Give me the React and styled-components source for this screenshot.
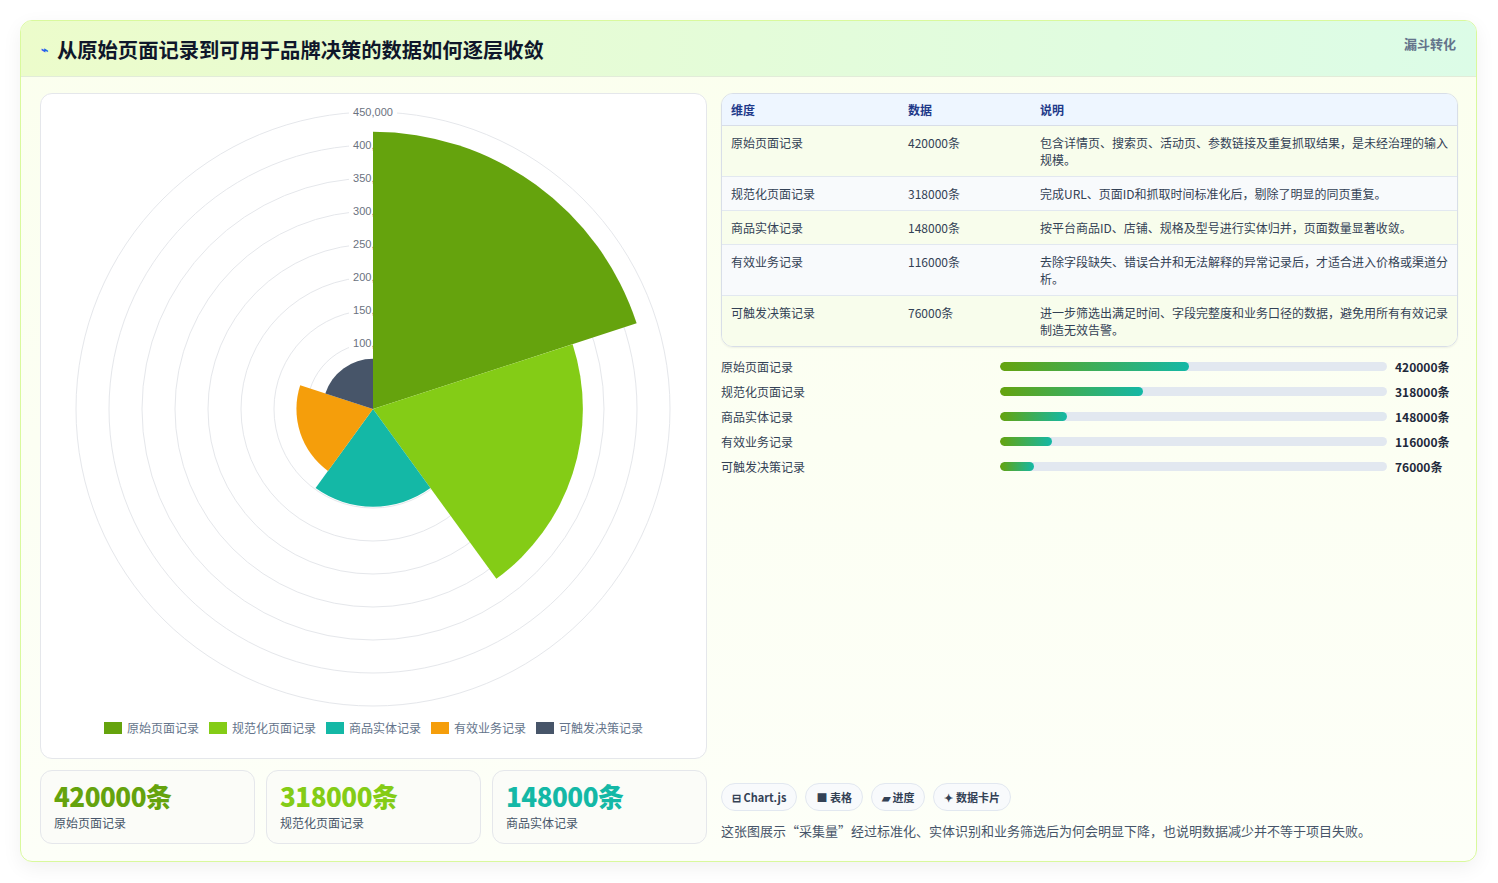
import React from 'react'
import styled, { createGlobalStyle } from 'styled-components'

const GlobalStyle = createGlobalStyle`
  body { margin: 0; background: #fff; font-family: "Noto Sans CJK SC", "Noto Sans", sans-serif; }
`

const rows = [
  { name: '原始页面记录', value: 420000, color: '#65a30d', desc: '包含详情页、搜索页、活动页、参数链接及重复抓取结果，是未经治理的输入规模。' },
  { name: '规范化页面记录', value: 318000, color: '#84cc16', desc: '完成URL、页面ID和抓取时间标准化后，剔除了明显的同页重复。' },
  { name: '商品实体记录', value: 148000, color: '#14b8a6', desc: '按平台商品ID、店铺、规格及型号进行实体归并，页面数量显著收敛。' },
  { name: '有效业务记录', value: 116000, color: '#f59e0b', desc: '去除字段缺失、错误合并和无法解释的异常记录后，才适合进入价格或渠道分析。' },
  { name: '可触发决策记录', value: 76000, color: '#475569', desc: '进一步筛选出满足时间、字段完整度和业务口径的数据，避免用所有有效记录制造无效告警。' },
]

const Page = styled.div`
  padding: 20px 21px 20px 20px;
`
const Frame = styled.div`
  border: 1px solid #d9f99d;
  border-radius: 12px;
  overflow: hidden;
  background: linear-gradient(180deg, #fbffee 0%, #fdfff8 100%);
  box-shadow: 0 6px 20px rgba(0,0,0,0.06);
`
const Header = styled.div`
  height: 55px;
  display: flex;
  align-items: center;
  justify-content: space-between;
  padding: 0 20px;
  background: linear-gradient(90deg, #ecfccb 0%, #dcfce7 100%);
  border-bottom: 1px solid #e2ecd9;
`
const Title = styled.h1`
  margin: 0;
  font-size: 20.3px;
  font-weight: 700;
  color: #0f172a;
  display: flex;
  align-items: center;
  gap: 9px;
`
const Bolt = styled.span`
  color: #2563eb;
  font-size: 12px;
`
const Badge = styled.span`
  font-size: 13px;
  font-weight: 700;
  color: #64748b;
  align-self: flex-start;
  margin-top: 13px;
`
const Body = styled.div`
  display: grid;
  grid-template-columns: 667px 1fr;
  gap: 14px;
  padding: 16px 18px 17px 19px;
`
const Left = styled.div`
  display: flex;
  flex-direction: column;
  gap: 11px;
`
const ChartCard = styled.div`
  height: 664px;
  background: #fff;
  border: 1px solid #e5e7eb;
  border-radius: 12px;
  display: flex;
  flex-direction: column;
  align-items: center;
`
const Legend = styled.div`
  display: flex;
  gap: 10px;
  margin-top: 3px;
  font-size: 12px;
  color: #64748b;
`
const LegendItem = styled.span`
  display: flex;
  align-items: center;
  gap: 5px;
  &::before {
    content: '';
    width: 18px;
    height: 12px;
    background: ${p => p.$color};
  }
`
const Stats = styled.div`
  display: grid;
  grid-template-columns: repeat(3, 1fr);
  gap: 11px;
`
const Stat = styled.div`
  height: 74px;
  box-sizing: border-box;
  border: 1px solid #e5e7eb;
  border-radius: 12px;
  background: #fbfcf8;
  padding: 7px 13px;
`
const StatValue = styled.div`
  font-size: 26px;
  font-weight: 900;
  line-height: 36px;
  letter-spacing: -0.5px;
  color: ${p => p.$color};
`
const StatLabel = styled.div`
  font-size: 12px;
  color: #475569;
`
const Right = styled.div`
  display: flex;
  flex-direction: column;
`
const Table = styled.table`
  width: 100%;
  border-collapse: separate;
  border-spacing: 0;
  border: 1px solid #d8dee8;
  border-radius: 12px;
  overflow: hidden;
  font-size: 12px;
  color: #334155;
  box-shadow: 0 1px 2px rgba(0,0,0,0.06);
`
const Th = styled.th`
  text-align: left;
  font-weight: 600;
  color: #1e3a8a;
  background: #eef6ff;
  padding: 7px 9px;
  line-height: 17px;
  border-bottom: 1px solid #d8dee8;
`
const Td = styled.td`
  padding: 8px 9px;
  vertical-align: top;
  line-height: 17px;
  background: ${p => p.$odd ? '#f8fafc' : '#f8fdec'};
  border-top: ${p => p.$first ? 'none' : '1px solid #e2e8f0'};
`
const Bars = styled.div`
  display: flex;
  flex-direction: column;
  gap: 7px;
  margin-top: 10px;
`
const BarRow = styled.div`
  display: grid;
  grid-template-columns: 279px 387px 1fr;
  align-items: center;
  font-size: 12px;
  color: #334155;
  height: 18px;
`
const Track = styled.div`
  height: 9px;
  border-radius: 5px;
  background: #e2e8f0;
  overflow: hidden;
`
const Fill = styled.div`
  height: 100%;
  border-radius: 5px;
  background: linear-gradient(90deg, #65a30d, #14b8a6);
`
const BarValue = styled.span`
  padding-left: 8px;
  font-weight: 700;
  color: #1e293b;
`
const Footer = styled.div`
  margin-top: auto;
  display: flex;
  flex-direction: column;
  gap: 10px;
  padding-bottom: 4px;
`
const Tags = styled.div`
  display: flex;
  gap: 8px;
`
const Tag = styled.span`
  border: 1px solid #e2e8f0;
  background: #f8fafc;
  border-radius: 14px;
  padding: 5px 10px;
  font-size: 11px;
  font-weight: 700;
  color: #334155;
`
const Note = styled.p`
  margin: 0;
  font-size: 13px;
  color: #475569;
`

function PolarChart() {
  const cx = 332, cy = 315, R = 297, max = 450000
  const rr = v => (v / max) * R
  const pt = (r, deg) => {
    const a = (deg * Math.PI) / 180
    return [cx + r * Math.cos(a), cy + r * Math.sin(a)]
  }
  const rings = [1, 2, 3, 4, 5, 6, 7, 8, 9].map(i => i * 50000)
  return (
    <svg width="666" height="622" viewBox="0 0 666 622">
      {rings.map(v => (
        <circle key={v} cx={cx} cy={cy} r={rr(v)} fill="none" stroke="#e5e7eb" strokeWidth="1" />
      ))}
      {rings.map(v => (
        <g key={'l' + v}>
          <rect x={cx - 24} y={cy - rr(v) - 7} width="48" height="14" fill="#fff" />
          <text x={cx} y={cy - rr(v) + 4} textAnchor="middle" fontSize="11" fill="#6b7280" fontFamily="Liberation Sans, sans-serif">
            {v.toLocaleString('en-US')}
          </text>
        </g>
      ))}
      {rows.map((d, i) => {
        const a0 = -90 + 72 * i, a1 = a0 + 72
        const r = rr(d.value)
        const [x0, y0] = pt(r, a0)
        const [x1, y1] = pt(r, a1)
        return <path key={d.name} d={`M${cx} ${cy} L${x0} ${y0} A${r} ${r} 0 0 1 ${x1} ${y1} Z`} fill={d.color} />
      })}
    </svg>
  )
}

export default function App() {
  return (
    <Page>
      <GlobalStyle />
      <Frame>
        <Header>
          <Title><Bolt>⌁</Bolt>从原始页面记录到可用于品牌决策的数据如何逐层收敛</Title>
          <Badge>漏斗转化</Badge>
        </Header>
        <Body>
          <Left>
            <ChartCard>
              <PolarChart />
              <Legend>
                {rows.map(d => <LegendItem key={d.name} $color={d.color}>{d.name}</LegendItem>)}
              </Legend>
            </ChartCard>
            <Stats>
              {rows.slice(0, 3).map(d => (
                <Stat key={d.name}>
                  <StatValue $color={d.color}>{d.value}条</StatValue>
                  <StatLabel>{d.name}</StatLabel>
                </Stat>
              ))}
            </Stats>
          </Left>
          <Right>
            <Table>
              <thead>
                <tr><Th style={{ width: 159 }}>维度</Th><Th style={{ width: 114 }}>数据</Th><Th>说明</Th></tr>
              </thead>
              <tbody>
                {rows.map((d, i) => (
                  <tr key={d.name}>
                    <Td $odd={i % 2 === 1} $first={i === 0}>{d.name}</Td>
                    <Td $odd={i % 2 === 1} $first={i === 0}>{d.value}条</Td>
                    <Td $odd={i % 2 === 1} $first={i === 0}>{d.desc}</Td>
                  </tr>
                ))}
              </tbody>
            </Table>
            <Bars>
              {rows.map(d => (
                <BarRow key={d.name}>
                  <span>{d.name}</span>
                  <Track><Fill style={{ width: `${(d.value / 860000) * 100}%` }} /></Track>
                  <BarValue>{d.value}条</BarValue>
                </BarRow>
              ))}
            </Bars>
            <Footer>
              <Tags>
                <Tag>⊟ Chart.js</Tag>
                <Tag>■ 表格</Tag>
                <Tag>▰ 进度</Tag>
                <Tag>✦ 数据卡片</Tag>
              </Tags>
              <Note>这张图展示“采集量”经过标准化、实体识别和业务筛选后为何会明显下降，也说明数据减少并不等于项目失败。</Note>
            </Footer>
          </Right>
        </Body>
      </Frame>
    </Page>
  )
}
